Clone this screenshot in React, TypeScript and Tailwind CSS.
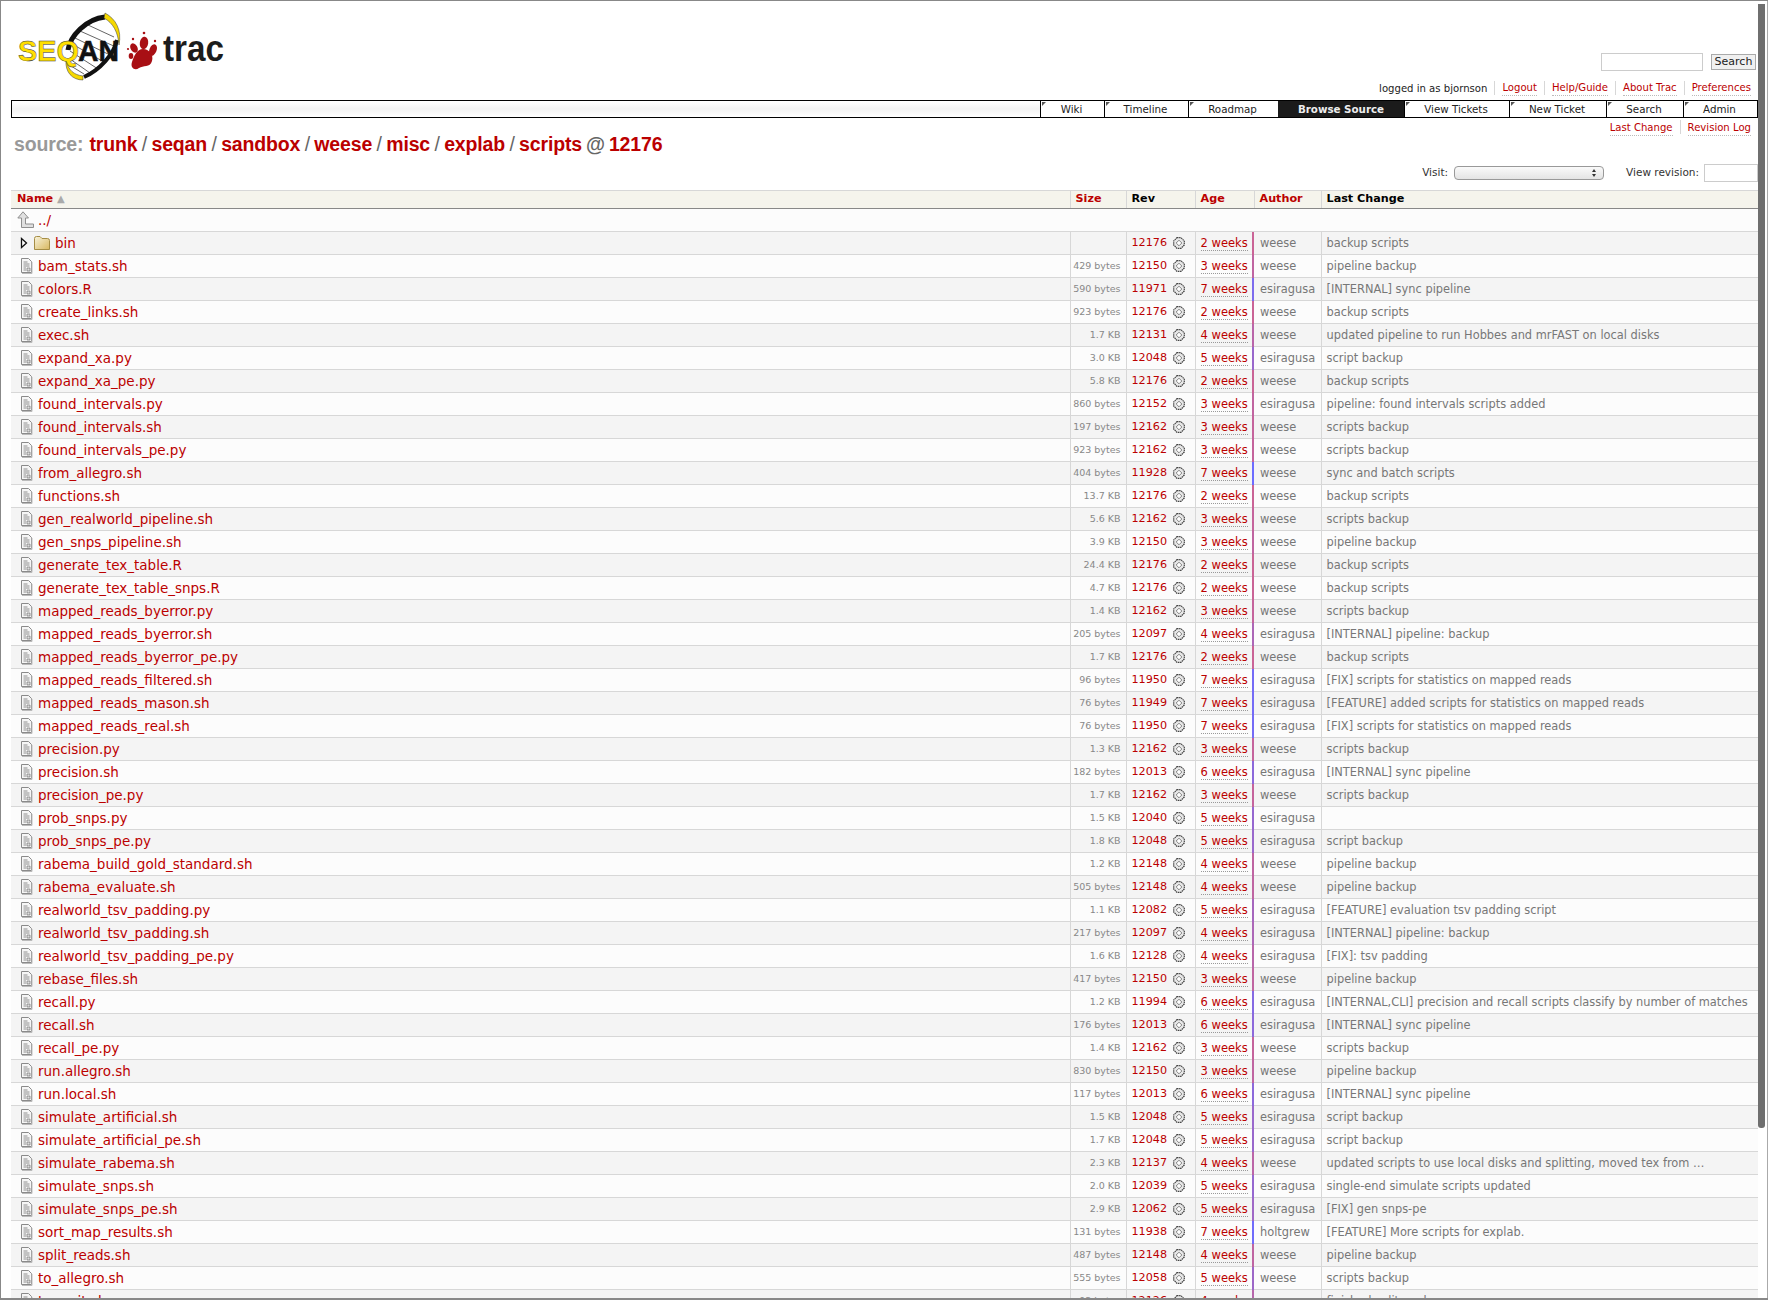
import React from "react";

const files: [string, string, number, string, string, string][] = [
  ["bam_stats.sh", "429 bytes", 12150, "3 weeks", "weese", "pipeline backup"],
  ["colors.R", "590 bytes", 11971, "7 weeks", "esiragusa", "[INTERNAL] sync pipeline"],
  ["create_links.sh", "923 bytes", 12176, "2 weeks", "weese", "backup scripts"],
  ["exec.sh", "1.7 KB", 12131, "4 weeks", "weese", "updated pipeline to run Hobbes and mrFAST on local disks"],
  ["expand_xa.py", "3.0 KB", 12048, "5 weeks", "esiragusa", "script backup"],
  ["expand_xa_pe.py", "5.8 KB", 12176, "2 weeks", "weese", "backup scripts"],
  ["found_intervals.py", "860 bytes", 12152, "3 weeks", "esiragusa", "pipeline: found intervals scripts added"],
  ["found_intervals.sh", "197 bytes", 12162, "3 weeks", "weese", "scripts backup"],
  ["found_intervals_pe.py", "923 bytes", 12162, "3 weeks", "weese", "scripts backup"],
  ["from_allegro.sh", "404 bytes", 11928, "7 weeks", "weese", "sync and batch scripts"],
  ["functions.sh", "13.7 KB", 12176, "2 weeks", "weese", "backup scripts"],
  ["gen_realworld_pipeline.sh", "5.6 KB", 12162, "3 weeks", "weese", "scripts backup"],
  ["gen_snps_pipeline.sh", "3.9 KB", 12150, "3 weeks", "weese", "pipeline backup"],
  ["generate_tex_table.R", "24.4 KB", 12176, "2 weeks", "weese", "backup scripts"],
  ["generate_tex_table_snps.R", "4.7 KB", 12176, "2 weeks", "weese", "backup scripts"],
  ["mapped_reads_byerror.py", "1.4 KB", 12162, "3 weeks", "weese", "scripts backup"],
  ["mapped_reads_byerror.sh", "205 bytes", 12097, "4 weeks", "esiragusa", "[INTERNAL] pipeline: backup"],
  ["mapped_reads_byerror_pe.py", "1.7 KB", 12176, "2 weeks", "weese", "backup scripts"],
  ["mapped_reads_filtered.sh", "96 bytes", 11950, "7 weeks", "esiragusa", "[FIX] scripts for statistics on mapped reads"],
  ["mapped_reads_mason.sh", "76 bytes", 11949, "7 weeks", "esiragusa", "[FEATURE] added scripts for statistics on mapped reads"],
  ["mapped_reads_real.sh", "76 bytes", 11950, "7 weeks", "esiragusa", "[FIX] scripts for statistics on mapped reads"],
  ["precision.py", "1.3 KB", 12162, "3 weeks", "weese", "scripts backup"],
  ["precision.sh", "182 bytes", 12013, "6 weeks", "esiragusa", "[INTERNAL] sync pipeline"],
  ["precision_pe.py", "1.7 KB", 12162, "3 weeks", "weese", "scripts backup"],
  ["prob_snps.py", "1.5 KB", 12040, "5 weeks", "esiragusa", ""],
  ["prob_snps_pe.py", "1.8 KB", 12048, "5 weeks", "esiragusa", "script backup"],
  ["rabema_build_gold_standard.sh", "1.2 KB", 12148, "4 weeks", "weese", "pipeline backup"],
  ["rabema_evaluate.sh", "505 bytes", 12148, "4 weeks", "weese", "pipeline backup"],
  ["realworld_tsv_padding.py", "1.1 KB", 12082, "5 weeks", "esiragusa", "[FEATURE] evaluation tsv padding script"],
  ["realworld_tsv_padding.sh", "217 bytes", 12097, "4 weeks", "esiragusa", "[INTERNAL] pipeline: backup"],
  ["realworld_tsv_padding_pe.py", "1.6 KB", 12128, "4 weeks", "esiragusa", "[FIX]: tsv padding"],
  ["rebase_files.sh", "417 bytes", 12150, "3 weeks", "weese", "pipeline backup"],
  ["recall.py", "1.2 KB", 11994, "6 weeks", "esiragusa", "[INTERNAL,CLI] precision and recall scripts classify by number of matches"],
  ["recall.sh", "176 bytes", 12013, "6 weeks", "esiragusa", "[INTERNAL] sync pipeline"],
  ["recall_pe.py", "1.4 KB", 12162, "3 weeks", "weese", "scripts backup"],
  ["run.allegro.sh", "830 bytes", 12150, "3 weeks", "weese", "pipeline backup"],
  ["run.local.sh", "117 bytes", 12013, "6 weeks", "esiragusa", "[INTERNAL] sync pipeline"],
  ["simulate_artificial.sh", "1.5 KB", 12048, "5 weeks", "esiragusa", "script backup"],
  ["simulate_artificial_pe.sh", "1.7 KB", 12048, "5 weeks", "esiragusa", "script backup"],
  ["simulate_rabema.sh", "2.3 KB", 12137, "4 weeks", "weese", "updated scripts to use local disks and splitting, moved tex from …"],
  ["simulate_snps.sh", "2.0 KB", 12039, "5 weeks", "esiragusa", "single-end simulate scripts updated"],
  ["simulate_snps_pe.sh", "2.9 KB", 12062, "5 weeks", "esiragusa", "[FIX] gen snps-pe"],
  ["sort_map_results.sh", "131 bytes", 11938, "7 weeks", "holtgrew", "[FEATURE] More scripts for explab."],
  ["split_reads.sh", "487 bytes", 12148, "4 weeks", "weese", "pipeline backup"],
  ["to_allegro.sh", "555 bytes", 12058, "5 weeks", "weese", "scripts backup"],
  ["to_wait.sh", "93 bytes", 12126, "4 weeks", "weese", "finished split work"],
];

const navItems: [string, string][] = [
  ["Wiki", "w-[64px]"],
  ["Timeline", "w-[84px]"],
  ["Roadmap", "w-[90px]"],
  ["Browse Source", "w-[126px]"],
  ["View Tickets", "w-[105px]"],
  ["New Ticket", "w-[97px]"],
  ["Search", "w-[77px]"],
  ["Admin", "w-[74px]"],
];

const crumbs = ["trunk", "seqan", "sandbox", "weese", "misc", "explab", "scripts"];

function ageColor(rev: number) {
  const t = (rev - 11928) / (12176 - 11928);
  return `rgb(${Math.round(108 + 94 * t)},${Math.round(108 - 8 * t)},${Math.round(255 - 105 * t)})`;
}

function Logo() {
  return (
    <svg width="220" height="90" viewBox="11 1 220 90" className="block">
      {/* helix */}
      <path d="M70 42C78 30 90 21 104 19C113 20 116 28 116 38C113 52 100 68 84 76C75 75 69 66 68 54Z" fill="#fff" />
      <g stroke="#666" strokeWidth="1">
        <path d="M88 25L114 37M80 31L116 47M75 38L110 55M72 44L104 62M70 51L98 69M70 59L90 73M71 66L84 74" />
      </g>
      <path d="M68 50C70 36 86 19 105 17" fill="none" stroke="#111" strokeWidth="5" />
      <path d="M117 40C114 54 100 70 84 77" fill="none" stroke="#111" strokeWidth="4" />
      <path d="M105 13C116 19 122 30 119 45C118 32 113 23 104 18Z" fill="#f5d800" stroke="#333" strokeWidth="0.5" />
      <path d="M66 60C68 70 74 75 83 76L83 80C72 80 65 72 66 60Z" fill="#f5d800" stroke="#333" strokeWidth="0.5" />
      <text x="18" y="61" fontFamily="'Liberation Sans', sans-serif" fontWeight="700" fontSize="30" fill="#ffdf00" stroke="#333" strokeWidth="0.45" textLength="61" lengthAdjust="spacingAndGlyphs">SEQ</text>
      <text x="78" y="61" fontFamily="'Liberation Sans', sans-serif" fontWeight="700" fontSize="30" fill="#111" stroke="#111" strokeWidth="0.5" textLength="41" lengthAdjust="spacingAndGlyphs">AN</text>
      {/* paw */}
      <g fill="#a80f14">
        <path d="M143 49C149 49 154 55 152 61C150 68 143 65 139 68C135 71 130 68 132 62C134 56 137 49 143 49Z" />
        <ellipse cx="134" cy="48" rx="3.4" ry="5" transform="rotate(-30 134 48)" />
        <ellipse cx="144" cy="43" rx="4.2" ry="6.2" transform="rotate(8 144 43)" />
        <ellipse cx="153" cy="50" rx="3.6" ry="6" transform="rotate(22 153 50)" />
        <ellipse cx="131" cy="56" rx="2.3" ry="3" />
        <circle cx="144" cy="33" r="1.3" />
        <circle cx="133" cy="39" r="1.2" />
        <circle cx="155" cy="41" r="1.2" />
        <circle cx="128" cy="49" r="1.1" />
      </g>
      <text x="163" y="61" fontFamily="'Liberation Sans', sans-serif" fontWeight="700" fontSize="37" fill="#1c1c1c" textLength="61" lengthAdjust="spacingAndGlyphs">trac</text>
    </svg>
  );
}

function FileIcon() {
  return (
    <svg width="14" height="16" viewBox="0 0 14 16" className="shrink-0">
      <path d="M2.5 .5H9.5L12.5 3.5V14.5H2.5Z" fill="#f6f6f6" stroke="#8a8a8a" />
      <path d="M3 15.5H13V4" fill="none" stroke="#bbb" />
      <path d="M4.5 4H8.5M4.5 6H10.5M4.5 8H10.5M4.5 10H7M4.5 12H7" stroke="#777" strokeWidth=".8" />
      <path d="M8 10H11V13H8Z" fill="#ddd" stroke="#777" strokeWidth=".7" />
    </svg>
  );
}

function FolderIcon() {
  return (
    <svg width="16" height="14" viewBox="0 0 16 14" className="shrink-0">
      <defs>
        <linearGradient id="fold" x1="0" y1="0" x2="1" y2="1">
          <stop offset="0" stopColor="#f8f3dc" />
          <stop offset="1" stopColor="#d8b860" />
        </linearGradient>
      </defs>
      <path d="M.5 2.5Q.5 .5 2.5 .5H6L8 2.5H13.5Q15.5 2.5 15.5 4.5V13.5H.5Z" fill="url(#fold)" stroke="#a58d45" />
    </svg>
  );
}

function UpIcon() {
  return (
    <svg width="17" height="18" viewBox="0 0 17 18" className="shrink-0">
      <path d="M6 .8L11.5 7H8.5V13H16.5V16.5H4.5V7H.8Z" fill="#e0e0e0" stroke="#8f8f8f" />
    </svg>
  );
}

function RevIcon() {
  return (
    <svg width="12" height="12" viewBox="0 0 12 12">
      <path d="M4 .7H8L11.3 4V8L8 11.3H4L.7 8V4Z" fill="#e8e8e8" stroke="#444" strokeWidth="1.2" strokeDasharray="1.5 .6" />
      <path d="M6 3.2L8.8 6L6 8.8L3.2 6Z" fill="#fff" stroke="#666" strokeWidth=".8" />
    </svg>
  );
}

function Sep() {
  return <span className="mx-[7px] inline-block h-[14px] w-px bg-[#d7d7d7] align-middle" />;
}

function Row({ f, even }: { f: (typeof files)[number]; even: boolean }) {
  const [name, size, rev, age, author, msg] = f;
  return (
    <tr className={even ? "bg-[#f4f4f4]" : "bg-[#fcfcfc]"}>
      <td className="h-[23px] border-b border-[#d7d7d7] p-0 pl-[8px] text-[13.5px] text-[#b00]">
        <span className="flex items-center gap-[5px] whitespace-nowrap">
          <FileIcon />
          {name}
        </span>
      </td>
      <td className="border-b border-l border-b-[#d7d7d7] border-l-[#d7d7d7] border-l-dotted p-0 pr-[5px] text-right text-[9.5px] whitespace-nowrap text-[#888]">{size}</td>
      <td className="border-b border-l border-b-[#d7d7d7] border-l-[#d7d7d7] border-l-dotted p-0 pl-[5px] text-[11.2px] text-[#b00]">
        <span className="flex items-center justify-between pr-[10px]">
          {rev}
          <RevIcon />
        </span>
      </td>
      <td className="border-b border-l border-b-[#d7d7d7] border-l-[#d7d7d7] border-l-dotted p-0 pl-[5px] text-[11.5px] whitespace-nowrap text-[#b00]">
        <span className="border-b border-dotted border-[#999]">{age}</span>
      </td>
      <td className="relative border-b border-b-[#d7d7d7] p-0 pl-[6px] text-[11.4px] whitespace-nowrap text-[#777]">
        <span className="absolute top-0 -bottom-px left-[-2px] w-[2px]" style={{ backgroundColor: ageColor(rev) }} />
        {author}
      </td>
      <td className="border-b border-l border-b-[#d7d7d7] border-l-[#d7d7d7] border-l-dotted p-0 pl-[5px] text-[11.4px] whitespace-nowrap text-[#777]">{msg}</td>
    </tr>
  );
}

export default function App() {
  return (
    <div className="relative h-[1300px] overflow-hidden border-t border-b-2 border-l border-[#888] bg-white pr-[10px] pl-[10px] font-['DejaVu_Sans',Verdana,sans-serif] text-[11px]">
      <div className="absolute top-[3px] right-[3px] h-[1124px] w-[7px] rounded-b-[3px] bg-[#6f6f6f]" />
      <div className="absolute top-0 right-0 bottom-0 w-px bg-[#aaa]" />

      <div className="flex h-[99px] justify-between">
        <Logo />
        <div className="flex flex-col items-end">
          <div className="mt-[52px] flex items-center">
            <input className="h-[18px] w-[102px] border border-[#ccc] bg-white" />
            <span className="mr-[2px] ml-[8px] flex h-[16px] w-[45px] items-center justify-center border border-[#aaa] bg-[#f0f0f0] text-[11px] text-[#222]">Search</span>
          </div>
          <div className="mt-[9px] flex items-center pr-[7px] text-[10.1px] text-[#222]">
            <span>logged in as bjornson</span>
            <Sep />
            <span className="border-b border-dotted border-[#bbb] text-[#b00]">Logout</span>
            <Sep />
            <span className="border-b border-dotted border-[#bbb] text-[#b00]">Help/Guide</span>
            <Sep />
            <span className="border-b border-dotted border-[#bbb] text-[#b00]">About Trac</span>
            <Sep />
            <span className="border-b border-dotted border-[#bbb] text-[#b00]">Preferences</span>
          </div>
        </div>
      </div>

      <nav className="flex h-[18px] justify-end border border-black bg-gradient-to-b from-white via-[#f2f2f2] to-white">
        {navItems.map(([label, w]) =>
          label === "Browse Source" ? (
            <div key={label} className={`${w} flex items-center justify-center bg-[#1b1b1b] pt-px text-[10.3px] font-bold text-[#eee]`}>
              {label}
            </div>
          ) : (
            <div key={label} className={`${w} relative flex items-center justify-center border-l border-black bg-white pt-px pr-[2px] text-[10.3px] text-[#222]`}>
              <span className="absolute top-px left-px h-0 w-0 border-t-[4px] border-r-[4px] border-t-[#555] border-r-transparent" />
              {label}
            </div>
          ),
        )}
      </nav>

      <div className="flex justify-end pt-[2px] pr-[7px] text-[10.1px] text-[#b00]">
        <span className="border-b border-dotted border-[#bbb]">Last Change</span>
        <Sep />
        <span className="border-b border-dotted border-[#bbb]">Revision Log</span>
      </div>

      <h1 className="mt-[-4px] ml-[3px] font-['Liberation_Sans',Arial,sans-serif] text-[19.5px] leading-[24px] font-bold tracking-[-0.15px] text-[#b00]">
        <span className="mr-[6px] text-[#999]">source:</span>
        {crumbs.map((c, i) => (
          <span key={c}>
            {c}
            {i < crumbs.length - 1 && <span className="mx-[4.4px] font-normal text-[#666]">/</span>}
          </span>
        ))}
        <span className="mx-[4px] font-bold text-[#666]">@</span>
        12176
      </h1>

      <div className="flex h-[34px] items-center justify-end text-[10.5px] text-[#333]">
        <span>Visit:</span>
        <span className="ml-[6px] flex h-[14px] w-[150px] items-center justify-end rounded-[4px] border border-[#999] bg-gradient-to-b from-[#fafafa] to-[#e4e4e4] pr-[6px]">
          <svg width="6" height="10" viewBox="0 0 6 10">
            <path d="M3 1L5 4H1ZM3 9L1 6H5Z" fill="#333" />
          </svg>
        </span>
        <span className="ml-[22px]">View revision:</span>
        <input className="ml-[5px] h-[18px] w-[54px] border border-[#ccc] bg-white" />
      </div>

      <table className="w-full table-fixed border-collapse">
        <colgroup>
          <col className="w-[1059px]" />
          <col className="w-[56px]" />
          <col className="w-[69px]" />
          <col className="w-[59px]" />
          <col className="w-[67px]" />
          <col />
        </colgroup>
        <thead>
          <tr className="bg-[#f5f4ec] text-left text-[11.2px] font-bold">
            <th className="h-[18px] border-t border-b border-t-[#d7d7d7] border-b-[#888] p-0 pl-[6px] text-[#b00]">
              Name <span className="text-[10px] font-normal text-[#aaa]">▲</span>
            </th>
            <th className="border-t border-b border-l border-t-[#d7d7d7] border-b-[#888] border-l-[#d7d7d7] p-0 pl-[5px] text-[#b00]">Size</th>
            <th className="border-t border-b border-l border-t-[#d7d7d7] border-b-[#888] border-l-[#d7d7d7] p-0 pl-[5px] text-black">Rev</th>
            <th className="border-t border-b border-l border-t-[#d7d7d7] border-b-[#888] border-l-[#d7d7d7] p-0 pl-[5px] text-[#b00]">Age</th>
            <th className="border-t border-b border-l border-t-[#d7d7d7] border-b-[#888] border-l-[#d7d7d7] p-0 pl-[5px] text-[#b00]">Author</th>
            <th className="border-t border-b border-l border-t-[#d7d7d7] border-b-[#888] border-l-[#d7d7d7] p-0 pl-[5px] text-black">Last Change</th>
          </tr>
        </thead>
        <tbody>
          <tr className="bg-[#fcfcfc]">
            <td colSpan={6} className="h-[23px] border-b border-[#d7d7d7] p-0 pl-[6px] text-[13.5px] text-[#b00]">
              <span className="flex items-center gap-[4px]">
                <UpIcon />
                ../
              </span>
            </td>
          </tr>
          <tr className="bg-[#f4f4f4]">
            <td className="h-[23px] border-b border-[#d7d7d7] p-0 pl-[9px] text-[13.5px] text-[#b00]">
              <span className="flex items-center">
                <svg width="8" height="12" viewBox="0 0 8 12" className="mr-[4px] shrink-0">
                  <path d="M1.5 1.5L6.5 6L1.5 10.5Z" fill="#fff" stroke="#111" strokeWidth="1.3" />
                </svg>
                <span className="ml-[2px]">
                  <FolderIcon />
                </span>
                <span className="ml-[5px]">bin</span>
              </span>
            </td>
            <td className="border-b border-l border-b-[#d7d7d7] border-l-[#d7d7d7] border-l-dotted p-0" />
            <td className="border-b border-l border-b-[#d7d7d7] border-l-[#d7d7d7] border-l-dotted p-0 pl-[5px] text-[11.2px] text-[#b00]">
              <span className="flex items-center justify-between pr-[10px]">
                12176
                <RevIcon />
              </span>
            </td>
            <td className="border-b border-l border-b-[#d7d7d7] border-l-[#d7d7d7] border-l-dotted p-0 pl-[5px] text-[11.5px] whitespace-nowrap text-[#b00]">
              <span className="border-b border-dotted border-[#999]">2 weeks</span>
            </td>
            <td className="relative border-b border-b-[#d7d7d7] p-0 pl-[6px] text-[11.4px] text-[#777]">
              <span className="absolute top-0 -bottom-px left-[-2px] w-[2px]" style={{ backgroundColor: ageColor(12176) }} />
              weese
            </td>
            <td className="border-b border-l border-b-[#d7d7d7] border-l-[#d7d7d7] border-l-dotted p-0 pl-[5px] text-[11.4px] text-[#777]">backup scripts</td>
          </tr>
          {files.map((f, i) => (
            <Row key={f[0]} f={f} even={i % 2 === 1} />
          ))}
        </tbody>
      </table>
    </div>
  );
}
